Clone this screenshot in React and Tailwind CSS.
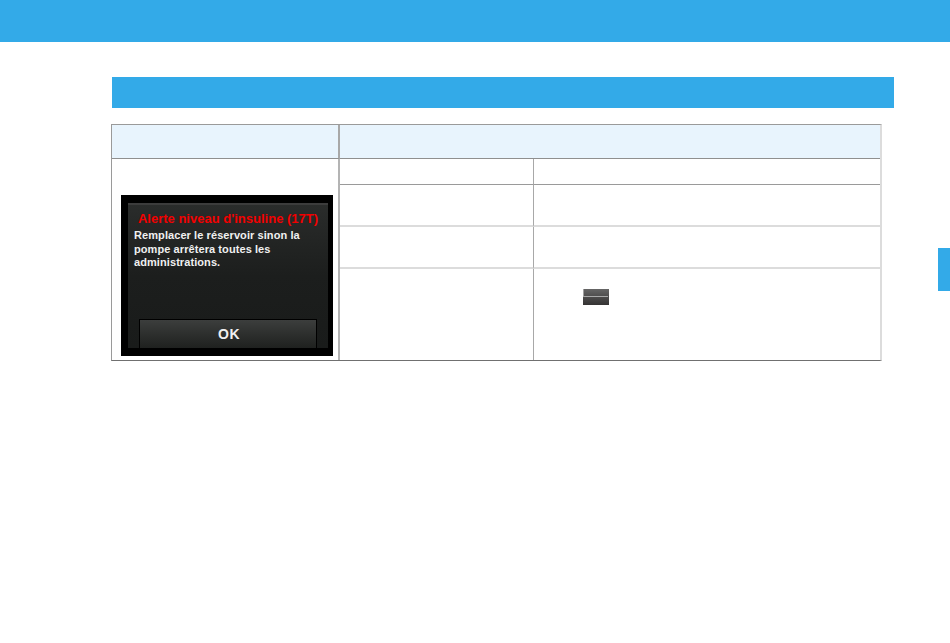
import React from 'react';

const rows = [
  { h: 'h-[42px]' },
  { h: 'h-[42px]' },
  { h: 'h-[91px]', key: true },
];

function PumpScreen() {
  return (
    <div className="w-[212px] h-[161px] bg-black pl-[7px] pr-[5px] pt-2 pb-2 font-['Liberation_Sans',sans-serif]">
      <div className="h-full flex flex-col bg-gradient-to-b from-[#2a2c2b] via-[#1c1e1d] to-[#191b1a] border-t-2 border-[#3c3c3c]">
        <p className="mt-[6px] text-center text-[13px] leading-4 font-bold text-[#f20000]">
          Alerte niveau d'insuline (17T)
        </p>
        <p className="mt-[2px] ml-[6px] text-[11px] leading-[13.5px] font-bold text-[#f0f0f0] tracking-[0.08px]">
          Remplacer le réservoir sinon la<br />
          pompe arrêtera toutes les<br />
          administrations.
        </p>
        <div className="mt-auto mx-[11px] h-[29px] flex items-center justify-center bg-gradient-to-b from-[#3c3e3d] to-[#1f211f] border-x border-t border-black">
          <span className="ml-[2px] text-[14px] font-bold text-[#f0f0f0] tracking-[0.5px]">OK</span>
        </div>
      </div>
    </div>
  );
}

export default function App() {
  return (
    <div className="w-[950px] h-[643px] bg-white overflow-hidden">
      <header className="h-[42px] bg-[#33aae8]" />

      <div className="flex">
        <main className="w-[894px] pl-[111px] pt-[35px]">
          <div className="ml-px h-[31px] bg-[#33aae8]" />

          <div className="mt-4 w-[771px] grid grid-cols-[228px_194px_346px] border border-[#9a9a9a] border-b-[#707070] border-r-[#dcdcdc] border-r-2">
            {/* Ligne d'en-tête */}
            <div className="h-[34px] bg-[#e8f4fd] border-r-2 border-[#a8a8a8] border-b border-b-[#8f8f8f]" />
            <div className="col-span-2 h-[34px] bg-[#e8f4fd] border-b border-[#8f8f8f]" />

            {/* Colonne écran */}
            <div className="row-span-4 border-r-2 border-[#b4b4b4] pl-[9px] pt-[36px]">
              <PumpScreen />
            </div>

            <div className="h-[26px] border-r border-[#a8a8a8] border-b border-b-[#9a9a9a]" />
            <div className="h-[26px] border-b border-[#9a9a9a]" />

            {rows.map((row, i) => (
              <React.Fragment key={i}>
                <div className={`${row.h} border-r border-[#a8a8a8] ${i < 2 ? 'border-b-2 border-b-[#dcdcdc]' : ''}`} />
                <div className={`${row.h} ${i < 2 ? 'border-b-2 border-[#dcdcdc]' : ''} ${row.key ? 'pl-[49px] pt-[20px]' : ''}`}>
                  {row.key && (
                    <div className="w-[26px] h-4 bg-gradient-to-b from-[#666666] to-[#353333]">
                      <div className="h-2 mr-px border-l border-[#a0a0a0] border-b border-b-[#a8a8a8]" />
                    </div>
                  )}
                </div>
              </React.Fragment>
            ))}
          </div>
        </main>

        <aside className="ml-auto pt-[206px]">
          <div className="w-3 h-[43px] bg-[#33aae8]" />
        </aside>
      </div>
    </div>
  );
}
